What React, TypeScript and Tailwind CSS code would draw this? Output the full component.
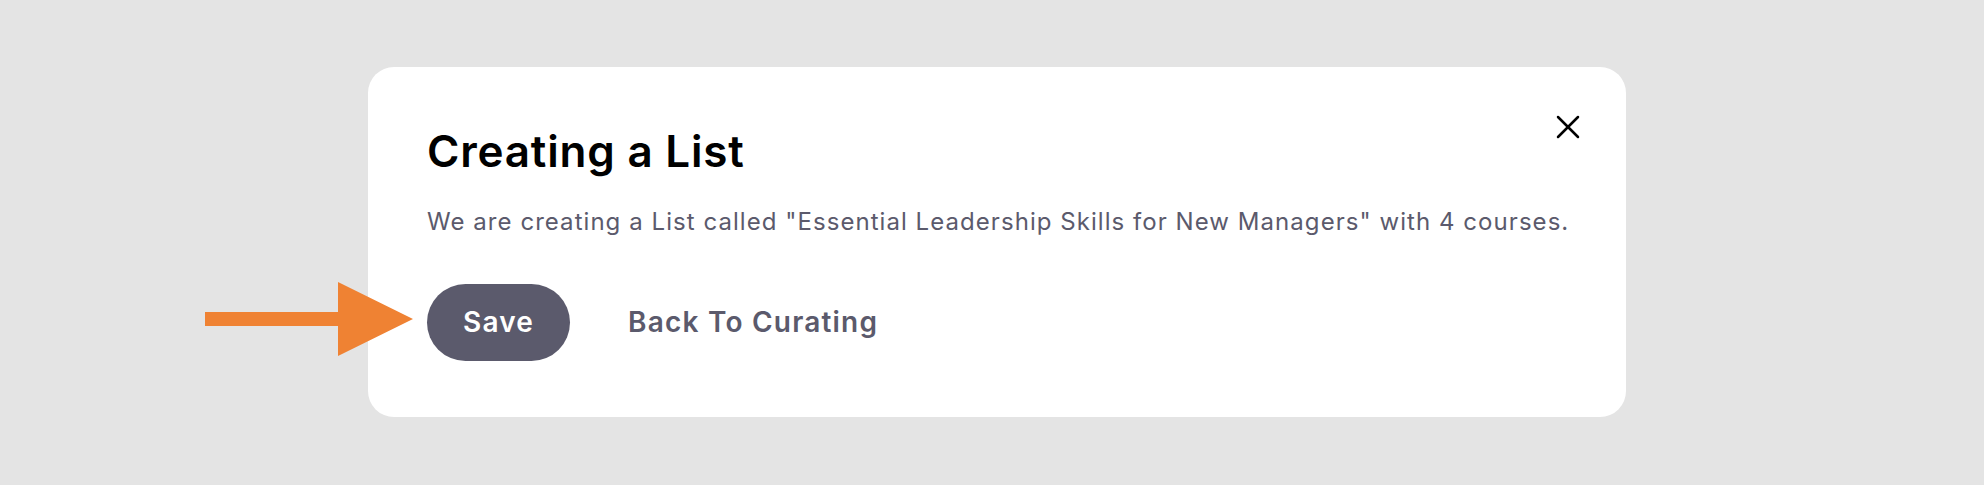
import {X} from "lucide-react"

const font = {fontFamily: "Inter, 'Noto Sans', sans-serif"}

const PointerArrow = () => (
  <svg
    className="absolute left-[205px] top-[282px]"
    width="208"
    height="74"
    viewBox="0 0 208 74"
    aria-hidden
  >
    <polygon points="0,30 133,30 133,0 208,37 133,74 133,44 0,44" fill="#ef8233" />
  </svg>
)

export default function App() {
  return (
    <div className="relative min-h-[485px] w-full bg-[#e4e4e4] pl-[368px] pt-[67px]" style={font}>
      <div className="relative h-[350px] w-[1258px] rounded-[26px] bg-white px-[59px] pt-[58px]">
        <button className="absolute right-[38px] top-[40px] text-black" aria-label="Close">
          <X size={40} strokeWidth={1.5} />
        </button>

        <h2 className="text-[44px] font-semibold leading-[1.2] tracking-[0.8px] text-black">Creating a List</h2>

        <p className="mt-[26px] whitespace-nowrap text-[24px] leading-[1.5] tracking-[1.05px] text-[#5b5a6c]">
          We are creating a List called "Essential Leadership Skills for New Managers" with 4 courses.
        </p>

        <div className="mt-[44px] flex items-center gap-[58px]">
          <button className="flex h-[77px] items-center rounded-full bg-[#5b5a6c] px-[36px] text-[28px] font-semibold tracking-[1.2px] text-white">
            Save
          </button>
          <button className="text-[28px] font-semibold tracking-[1.2px] text-[#5b5a6c]">Back To Curating</button>
        </div>
      </div>

      <PointerArrow />
    </div>
  )
}
